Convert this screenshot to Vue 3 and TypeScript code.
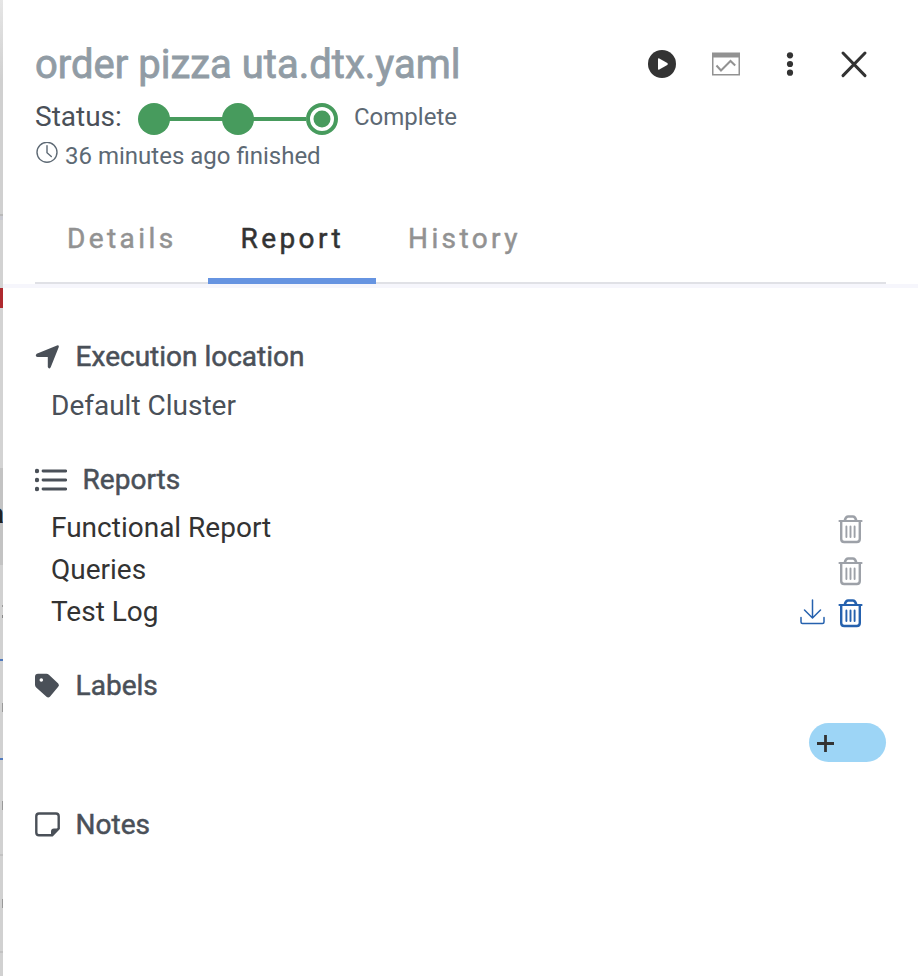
<script setup lang="ts">
import { ref } from 'vue'

interface Report {
  name: string
  downloadable: boolean
}

const tabs: string[] = ['Details', 'Report', 'History']
const activeTab = ref<string>('Report')
const reports: Report[] = [
  { name: 'Functional Report', downloadable: false },
  { name: 'Queries', downloadable: false },
  { name: 'Test Log', downloadable: true },
]
</script>

<template>
  <div class="screen">
    <div class="backdrop"><span class="backdrop-text">a</span></div>
    <main class="panel">
      <header class="header">
        <div class="title-row">
          <h1 class="title">order pizza uta.dtx.yaml</h1>
          <div class="actions">
            <svg width="28" height="28" viewBox="0 0 28 28">
              <circle cx="14" cy="14" r="14" fill="#333" />
              <path d="M10 9.200v9.600q0 1.500 1.300.8l8-4.700q1.200-.9 0-1.800l-8-4.700Q10 7.700 10 9.200z" fill="#fff" />
            </svg>
            <svg width="28" height="24" viewBox="0 0 28 24">
              <path d="M0 .5h28v23H0z M1.500 5.500v16.500h25V5.500z" fill="#929292" fill-rule="evenodd" />
              <path d="M4.500 13.500l4.500 5 9.500-9.500 4.700 4.500" fill="none" stroke="#929292" stroke-width="2" />
            </svg>
            <svg width="28" height="28" viewBox="0 0 28 28" fill="#333">
              <circle cx="14" cy="5.300" r="3.100" />
              <circle cx="14" cy="14" r="3.100" />
              <circle cx="14" cy="22.700" r="3.100" />
            </svg>
            <svg width="28" height="28" viewBox="0 0 28 28">
              <path d="M3 3l22 22.600M25 3L3 25.600" fill="none" stroke="#333" stroke-width="3" stroke-linecap="round" />
            </svg>
          </div>
        </div>
        <div class="status-row">
          <span class="status-label">Status:</span>
          <svg class="steps" width="200" height="32" viewBox="0 0 200 32">
            <path d="M16 16h152" stroke="#479b5d" stroke-width="4" />
            <circle cx="16" cy="16" r="16" fill="#479b5d" />
            <circle cx="100" cy="16" r="16" fill="#479b5d" />
            <circle cx="184" cy="16" r="14" fill="#fff" stroke="#479b5d" stroke-width="4" />
            <circle cx="184" cy="16" r="8.500" fill="#479b5d" />
          </svg>
          <span class="status-value">Complete</span>
        </div>
        <div class="time-row">
          <svg width="22" height="22" viewBox="0 0 22 22" fill="none" stroke="#5d6974" stroke-width="1.400">
            <circle cx="11" cy="10.300" r="10" />
            <path d="M11 3.600v7.200l4.300 3.800" stroke-linecap="round" />
          </svg>
          <span>36 minutes ago finished</span>
        </div>
        <nav class="tabs">
          <button
            v-for="tab in tabs"
            :key="tab"
            class="tab"
            :class="{ active: tab === activeTab }"
            @click="activeTab = tab"
          >{{ tab }}</button>
        </nav>
      </header>

      <section class="location">
        <h2 class="heading">
          <svg width="25" height="26" viewBox="0 0 25 26">
            <path d="M1.700 9.800L22 1.400q2.300-.5 1.700 1.800l-8 20q-1.700 2.500-2.900-.3V13.100H2.500q-3-.8-.8-3.300z" fill="#4a5058" />
          </svg>
          <span>Execution location</span>
        </h2>
        <p class="cluster">Default Cluster</p>
      </section>

      <section class="reports">
        <h2 class="heading wide">
          <svg width="32" height="24" viewBox="0 0 32 24" fill="#4a5058">
            <circle cx="2" cy="3" r="2.200" />
            <circle cx="2" cy="12" r="2.200" />
            <circle cx="2" cy="21" r="2.200" />
            <path d="M8 3h22.700M8 12h22.700M8 21h22.700" stroke="#4a5058" stroke-width="2.800" stroke-linecap="round" />
          </svg>
          <span>Reports</span>
        </h2>
        <ul class="report-list">
          <li v-for="report in reports" :key="report.name" class="report" :class="{ enabled: report.downloadable }">
            <span class="report-name">{{ report.name }}</span>
            <svg v-if="report.downloadable" class="download" width="25" height="26" viewBox="0 0 25 26">
              <path d="M12.500 1v17.500M4.500 11l8 8 8-8M1 18.500V23q0 1.500 1.500 1.500h20Q24 24.500 24 23v-4.500" fill="none" stroke="currentColor" stroke-width="1.500" stroke-linecap="round" stroke-linejoin="round" />
            </svg>
            <svg class="trash" width="25" height="30" viewBox="0 0 25 30" fill="none" stroke="currentColor">
              <path d="M1.500 7h22" stroke-width="2.200" stroke-linecap="round" />
              <path d="M6.800 6.500q1-4 3.300-4h4.800q2.300 0 3.300 4" stroke-width="2.600" />
              <path d="M3.200 8v17q0 3 3 3h12.600q3 0 3-3V8" stroke-width="2.400" />
              <path d="M8.400 12.500v10.500M12.500 12.500v10.500M16.600 12.500v10.500" stroke-width="1.900" stroke-linecap="round" />
            </svg>
          </li>
        </ul>
      </section>

      <section class="labels">
        <h2 class="heading">
          <svg width="25" height="26" viewBox="0 0 25 26">
            <path d="M0 3.700q0-3 3-3h8.500q1.300 0 2.400 1l9.300 8.700q1.600 1.700 0 3.400l-8.300 10q-1.700 1.600-3.400 0L1.200 14.500Q0 13.200 0 11.700z" fill="#4a5058" />
            <circle cx="6.300" cy="7" r="1.800" fill="#fff" />
          </svg>
          <span>Labels</span>
        </h2>
        <button class="add-label" aria-label="Add label">
          <svg width="17" height="17" viewBox="0 0 17 17">
            <path d="M8.500 0v17M0 8.500h17" stroke="#333" stroke-width="2.800" />
          </svg>
        </button>
      </section>

      <section class="notes">
        <h2 class="heading">
          <svg width="25" height="26" viewBox="0 0 25 26">
            <path d="M4 1.500h17q2.700 0 2.700 2.700v12.300l-6.500 6.800H4q-2.700 0-2.700-2.700V4.200q0-2.700 2.700-2.700z" fill="none" stroke="#4a5058" stroke-width="2.400" />
            <path d="M16 24V19.500q0-3 3-3h5.500z" fill="#4a5058" />
          </svg>
          <span>Notes</span>
        </h2>
      </section>
    </main>
  </div>
</template>

<style>
body {
  margin: 0;
  background: #fff;
}
</style>

<style scoped>
.screen {
  display: flex;
  height: 976px;
  overflow: hidden;
  font-family: Roboto, "Liberation Sans", sans-serif;
  font-size: 28px;
  line-height: 32px;
  color: #4a5058;
}
.backdrop {
  position: relative;
  flex: 0 0 3px;
  overflow: hidden;
  background:
    linear-gradient(#999, #999) 2px 703px / 1px 9px no-repeat,
    linear-gradient(#999, #999) 2px 801px / 1px 9px no-repeat,
    linear-gradient(#999, #999) 2px 899px / 1px 9px no-repeat,
    linear-gradient(#999, #999) 2px 605px / 1px 2px no-repeat,
    linear-gradient(#888, #888) 2px 615px / 1px 3px no-repeat,
    linear-gradient(#e6e6e6, #d0d0d0 80px, #d0d0d0 214px, #b9b9b9 214px, #b9b9b9 216px, #c9cad1 216px, #c9cad1 220px, #d2d2d2 220px, #d2d2d2 288px, #ae292e 288px, #ae292e 308px, #d3d3d3 308px, #d3d3d3 468px, #c3c3c3 468px, #c3c3c3 565px, #d1d1d1 565px, #d1d1d1 659px, #5079bd 659px, #5079bd 661px, #d1d1d1 661px, #d1d1d1 758px, #5079bd 758px, #5079bd 760px, #d1d1d1 760px, #d1d1d1 854px, #c2c2c2 854px, #c2c2c2 856px, #d1d1d1 856px, #d1d1d1 951px, #c2c2c2 951px, #c2c2c2 953px, #d1d1d1 953px);
}
.backdrop-text {
  position: absolute;
  right: -1px;
  top: 498px;
  font-weight: 500;
  color: #222;
}
.panel {
  flex: 1;
  display: flex;
  flex-direction: column;
  background: #fff;
}
.header {
  box-sizing: border-box;
  height: 288px;
  padding: 40px 32px 0;
  border-bottom: 4px solid #f6f6fc;
}
.title-row {
  display: flex;
  justify-content: space-between;
  height: 47px;
}
.title {
  margin: 0;
  font-size: 40px;
  line-height: 50px;
  font-weight: 400;
  color: #919ca5;
  -webkit-text-stroke: 0.8px #919ca5;
}
.actions {
  display: flex;
  align-items: center;
  gap: 36px;
  margin-right: 18px;
}
.status-row {
  display: flex;
  align-items: flex-start;
  height: 42px;
  padding-top: 14px;
  box-sizing: border-box;
  margin-bottom: 13px;
}
.status-label {
  width: 103px;
}
.steps {
  margin-top: 2px;
}
.status-value {
  margin-left: 16px;
  font-size: 24px;
  color: #5d6974;
}
.time-row {
  display: flex;
  gap: 7px;
  height: 28px;
  padding-left: 1px;
  font-size: 24px;
  line-height: 28px;
  color: #5d6974;
}
.tabs {
  display: flex;
  box-sizing: border-box;
  height: 92px;
  margin-top: 22px;
  border-bottom: 2px solid #e0e1e6;
}
.tab {
  box-sizing: border-box;
  height: 92px;
  padding: 8px 32px 0;
  border: 0;
  border-bottom: 6px solid transparent;
  background: none;
  font: inherit;
  font-weight: 400;
  letter-spacing: 3.400px;
  color: #929292;
  -webkit-text-stroke: 0.5px currentColor;
}
.tab.active {
  border-bottom-color: #6694e1;
  color: #333;
}
.heading {
  display: flex;
  align-items: center;
  gap: 15.600px;
  height: 32px;
  margin: 0;
  font-size: 28px;
  font-weight: 400;
  -webkit-text-stroke: 0.5px currentColor;
}
.heading svg {
  -webkit-text-stroke: 0;
}
.location {
  padding: 53px 32px 0;
}
.cluster {
  margin: 17px 0 0 16px;
}
.reports {
  padding: 42px 32px 0;
}
.report-list {
  margin: 11px 0 0;
  padding: 0 23px 0 16px;
  list-style: none;
}
.report {
  display: flex;
  align-items: center;
  height: 42px;
  color: #9da1a8;
}
.report.enabled {
  color: #2561ae;
}
.report-name {
  flex: 1;
  color: #333;
}
.download {
  margin-right: 13px;
}
.trash {
  margin-top: 2px;
}
.labels {
  display: flex;
  flex-direction: column;
  padding: 37px 32px 0;
}
.add-label {
  display: flex;
  align-items: center;
  align-self: flex-end;
  box-sizing: border-box;
  width: 77px;
  height: 39px;
  margin-top: 21px;
  padding: 2px 0 0 8px;
  border: 0;
  border-radius: 20px;
  background: #9dd5f6;
}
.notes {
  padding: 47px 32px 0;
}
</style>
